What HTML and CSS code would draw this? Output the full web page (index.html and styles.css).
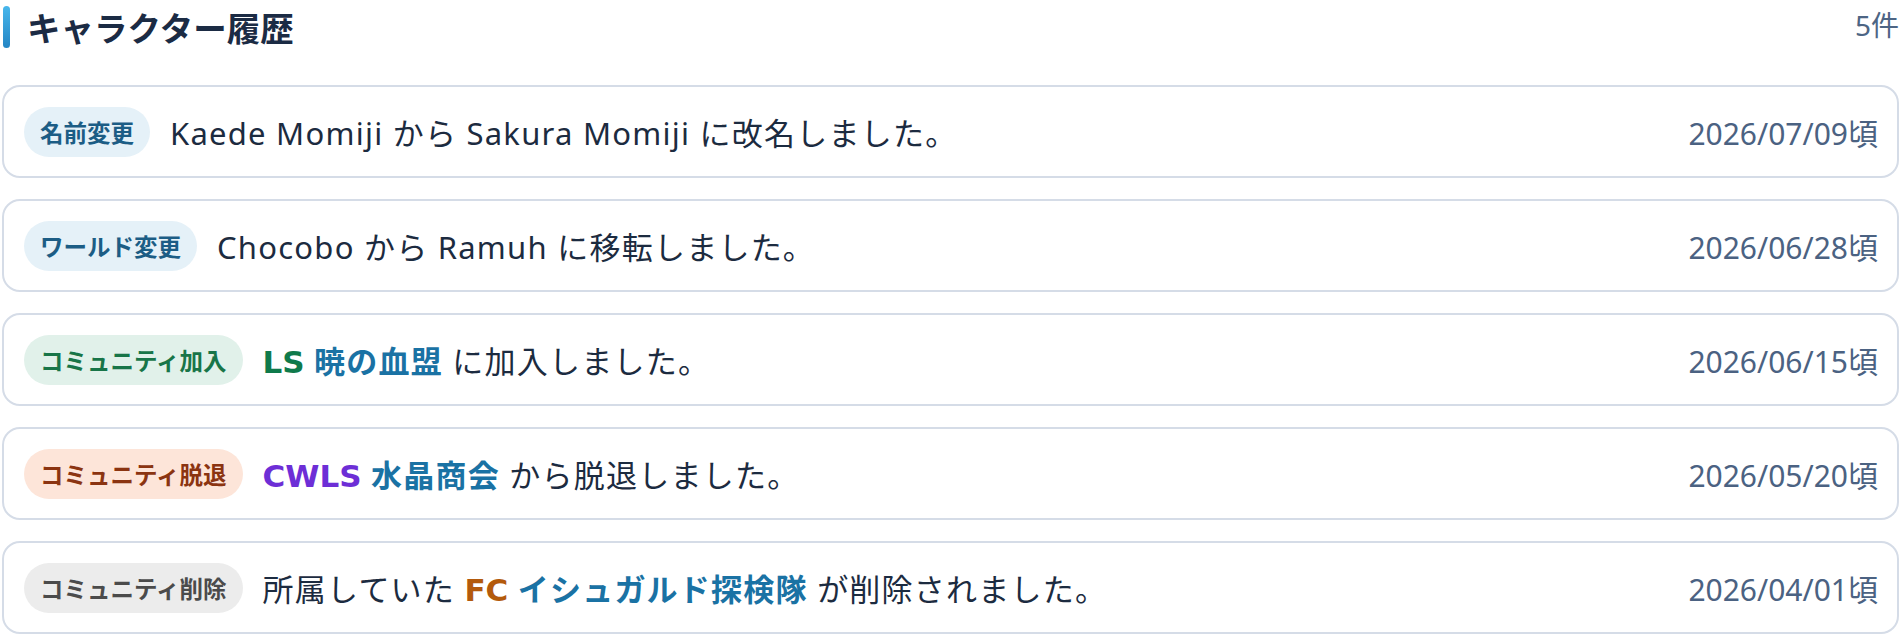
FILE: index.html
```html
<!DOCTYPE html>
<html lang="ja">
<head>
    <meta charset="utf-8">
    <title>キャラクター履歴</title>
    <link rel="stylesheet" href="styles.css">
</head>
<body>
    <div class="history">
        <div class="history-header">
            <h2 class="history-title">キャラクター履歴</h2>
            <span class="history-count">5件</span>
        </div>

        <ul class="history-list">
            <li class="history-item">
                <span class="badge badge-blue">名前変更</span>
                <span class="message">Kaede Momiji から Sakura Momiji に改名しました。</span>
                <span class="date">2026/07/09頃</span>
            </li>
            <li class="history-item">
                <span class="badge badge-blue">ワールド変更</span>
                <span class="message">Chocobo から Ramuh に移転しました。</span>
                <span class="date">2026/06/28頃</span>
            </li>
            <li class="history-item">
                <span class="badge badge-green">コミュニティ加入</span>
                <span class="message"><b class="tag tag-ls">LS</b> <b class="name">暁の血盟</b> に加入しました。</span>
                <span class="date">2026/06/15頃</span>
            </li>
            <li class="history-item">
                <span class="badge badge-peach">コミュニティ脱退</span>
                <span class="message"><b class="tag tag-cwls">CWLS</b> <b class="name">水晶商会</b> から脱退しました。</span>
                <span class="date">2026/05/20頃</span>
            </li>
            <li class="history-item">
                <span class="badge badge-gray">コミュニティ削除</span>
                <span class="message">所属していた <b class="tag tag-fc">FC</b> <b class="name">イシュガルド探検隊</b> が削除されました。</span>
                <span class="date">2026/04/01頃</span>
            </li>
        </ul>
    </div>
</body>
</html>
```

FILE: styles.css
```css
body {
    margin: 0;
    padding: 0;
    background-color: #fff;
    font-family: "Noto Sans", "Noto Sans CJK JP", sans-serif;
    color: #1c2b40;
}

.history {
    padding: 0 3px 0 2px;
}

.history-header {
    display: flex;
    align-items: center;
    justify-content: space-between;
    padding-top: 6px;
    margin-bottom: 37px;
}

.history-title {
    display: flex;
    align-items: center;
    gap: 17px;
    margin: 0;
    font-family: "Noto Sans CJK JP", sans-serif;
    font-size: 33.5px;
    font-weight: bold;
    color: #1b2b44;
    line-height: 42px;
}

.history-title::before {
    content: "";
    display: block;
    width: 7px;
    height: 42px;
    margin-left: 1px;
    border-radius: 4px;
    background: linear-gradient(#48b7ec, #2385c4);
}

.history-count {
    font-size: 28px;
    color: #4d6584;
    margin-top: -6px;
}

.history-list {
    list-style: none;
    margin: 0;
    padding: 0;
    display: flex;
    flex-direction: column;
    gap: 21px;
}

.history-item {
    display: flex;
    align-items: center;
    gap: 20px;
    padding: 19.5px 19px 19.5px 20px;
    border: 2px solid #d5dce7;
    border-radius: 18px;
    background-color: #fff;
}

.badge {
    flex-shrink: 0;
    padding: 12px 16px;
    border-radius: 25px;
    font-family: "Noto Sans CJK JP", sans-serif;
    font-size: 23.5px;
    font-weight: bold;
    line-height: 26px;
}

.badge-blue {
    background-color: #e5f1f8;
    color: #1c5d85;
}

.badge-green {
    background-color: #e1f1ea;
    color: #187548;
}

.badge-peach {
    background-color: #fde5d9;
    color: #8b3411;
}

.badge-gray {
    background-color: #ececec;
    color: #4b4b4b;
}

.message {
    flex: 1;
    font-size: 31px;
    letter-spacing: 0.04em;
    white-space: nowrap;
}

.message b {
    font-weight: bold;
}

.tag {
    font-family: "DejaVu Sans", sans-serif;
    letter-spacing: 0;
}

.tag-ls {
    color: #0f7a4b;
}

.tag-cwls {
    color: #6d2ed6;
}

.tag-fc {
    color: #b35a0c;
}

.name {
    color: #1a72a4;
}

.date {
    flex-shrink: 0;
    font-size: 30px;
    color: #4b6282;
}
```
